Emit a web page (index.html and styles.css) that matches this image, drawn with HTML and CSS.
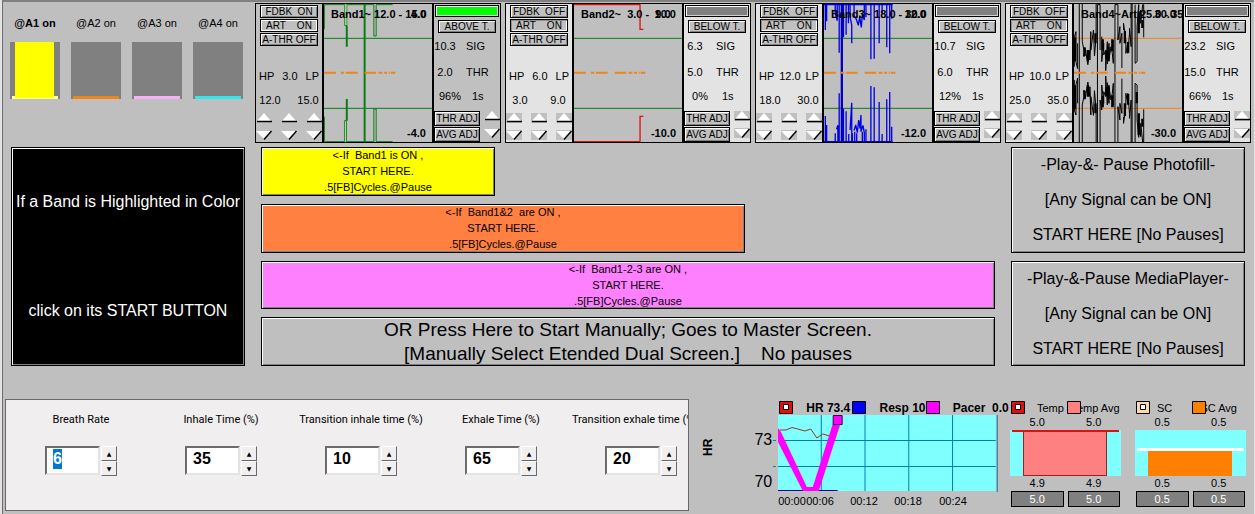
FILE: index.html
```html
<!DOCTYPE html>
<html lang="en">
<head>
<meta charset="utf-8">
<title>Band Training</title>
<link rel="stylesheet" href="styles.css">
</head>
<body>
<svg class="defs" aria-hidden="true">
  <symbol id="up" viewBox="0 0 16 10"><path d="M8 0L15 8H1z" fill="#fff"/><path d="M1 8.500H16" stroke="#000" stroke-width="1.500"/></symbol>
  <symbol id="down" viewBox="0 0 16 10"><path d="M0 1H15L8 9z" fill="#fff"/><path d="M8 9.500L15.500 1" stroke="#000" stroke-width="1.500"/></symbol>
  <symbol id="dashes" viewBox="222 12 327 414" preserveAspectRatio="none"><path d="M222 218H258M273 218H283M288 218H324M345 218H380M387 218H399M404 218H413M418 218H421M424 218H438" stroke="#f08418" stroke-width="6"/></symbol>
  <symbol id="marker" viewBox="0 0 14 13"><path d="M.5.5h13v12H.5z" stroke="#000"/></symbol>
  <symbol id="target" viewBox="0 0 14 13"><path d="M.5.5h13v12H.5z" stroke="#000"/><path d="M4.500 3.500h5v5h-5z" fill="#fff" stroke="#000"/></symbol>
</svg>
<main class="screen">
  <header class="top">
    <section class="signals">
      <div class="signal on"><span>@A1 on</span><div class="well yellow"><i></i></div></div>
      <div class="signal"><span>@A2 on</span><div class="well orange"></div></div>
      <div class="signal"><span>@A3 on</span><div class="well pink"></div></div>
      <div class="signal"><span>@A4 on</span><div class="well cyan"></div></div>
    </section>
    <section class="bands">
      <article class="band active">
        <div class="filters">
          <button>FDBK&nbsp; ON</button><button class="art">ART &nbsp; &nbsp;ON</button><button>A-THR OFF</button>
          <div class="row first"><span>HP</span><span>3.0</span><span>LP</span></div>
          <div class="row"><span>12.0</span><span>15.0</span></div>
          <div class="spins">
            <div class="spin"><button aria-label="High pass up"><svg><use href="#up"/></svg></button><button aria-label="High pass down"><svg><use href="#down"/></svg></button></div>
            <div class="spin"><button aria-label="Width up"><svg><use href="#up"/></svg></button><button aria-label="Width down"><svg><use href="#down"/></svg></button></div>
            <div class="spin"><button aria-label="Low pass up"><svg><use href="#up"/></svg></button><button aria-label="Low pass down"><svg><use href="#down"/></svg></button></div>
          </div>
        </div>
        <div class="scope">
          <svg viewBox="222 12 327 414" preserveAspectRatio="none" fill="none" stroke="#0c7c14" stroke-width="3">
            <path d="M222 115H549M222 325H549"/>
            <path d="M223 87V14H285V77H291V14H373V108H380V14H430M223 350V425H284V362H290V425H373V327H380V425H430" />
            <path d="M286 15h4v60h-4zM285 364h4v60h-4z" fill="#a0dca0" stroke="none"/>
            <path d="M345 12V426M291 77V140M291 297V362" stroke-width="6"/>
            <use href="#dashes" x="222" y="12" width="327" height="414"/>
          </svg>
          <b class="title">Band1~ 12.0 - 15.0</b><b class="max">4.0</b><b class="min">-4.0</b>
        </div>
        <div class="levels">
          <div class="lamp"></div><button class="state">ABOVE T.</button>
          <div class="level"><span>10.3</span><span>SIG</span></div>
          <div class="level"><span>2.0</span><span>THR</span></div>
          <div class="level time"><span>96%</span><span>1s</span></div>
          <div class="adjust"><div class="adj"><button>THR ADJ</button><button>AVG ADJ</button></div>
            <div class="spin"><button aria-label="Adjust up"><svg><use href="#up"/></svg></button><button aria-label="Adjust down"><svg><use href="#down"/></svg></button></div></div>
        </div>
      </article>

      <article class="band">
        <div class="filters">
          <button>FDBK&nbsp; OFF</button><button class="art">ART &nbsp; &nbsp;ON</button><button>A-THR OFF</button>
          <div class="row first"><span>HP</span><span>6.0</span><span>LP</span></div>
          <div class="row"><span>3.0</span><span>9.0</span></div>
          <div class="spins">
            <div class="spin"><button aria-label="High pass up"><svg><use href="#up"/></svg></button><button aria-label="High pass down"><svg><use href="#down"/></svg></button></div>
            <div class="spin"><button aria-label="Width up"><svg><use href="#up"/></svg></button><button aria-label="Width down"><svg><use href="#down"/></svg></button></div>
            <div class="spin"><button aria-label="Low pass up"><svg><use href="#up"/></svg></button><button aria-label="Low pass down"><svg><use href="#down"/></svg></button></div>
          </div>
        </div>
        <div class="scope">
          <svg viewBox="222 12 327 414" preserveAspectRatio="none" fill="none" stroke="#0c7c14" stroke-width="3">
            <path d="M222 115H549M222 325H549"/>
            <path d="M222 14H422V88H432M222 425H422V349H432" stroke="#e01010" stroke-width="4"/>
            <use href="#dashes" x="222" y="12" width="327" height="414"/>
          </svg>
          <b class="title">Band2~  3.0 -  9.0</b><b class="max">10.0</b><b class="min">-10.0</b>
        </div>
        <div class="levels">
          <div class="lamp"></div><button class="state">BELOW T.</button>
          <div class="level"><span>6.3</span><span>SIG</span></div>
          <div class="level"><span>5.0</span><span>THR</span></div>
          <div class="level time"><span>0%</span><span>1s</span></div>
          <div class="adjust"><div class="adj"><button>THR ADJ</button><button>AVG ADJ</button></div>
            <div class="spin"><button aria-label="Adjust up"><svg><use href="#up"/></svg></button><button aria-label="Adjust down"><svg><use href="#down"/></svg></button></div></div>
        </div>
      </article>

      <article class="band">
        <div class="filters">
          <button>FDBK&nbsp; OFF</button><button class="art">ART &nbsp; &nbsp;ON</button><button>A-THR OFF</button>
          <div class="row first"><span>HP</span><span>12.0</span><span>LP</span></div>
          <div class="row"><span>18.0</span><span>30.0</span></div>
          <div class="spins">
            <div class="spin"><button aria-label="High pass up"><svg><use href="#up"/></svg></button><button aria-label="High pass down"><svg><use href="#down"/></svg></button></div>
            <div class="spin"><button aria-label="Width up"><svg><use href="#up"/></svg></button><button aria-label="Width down"><svg><use href="#down"/></svg></button></div>
            <div class="spin"><button aria-label="Low pass up"><svg><use href="#up"/></svg></button><button aria-label="Low pass down"><svg><use href="#down"/></svg></button></div>
          </div>
        </div>
        <div class="scope">
          <svg viewBox="222 12 327 414" preserveAspectRatio="none" fill="none" stroke="#0c7c14" stroke-width="3">
            <path d="M222 115H549M222 325H549"/>
            <path stroke="#0000e8" stroke-width="4" d="M222 14H430M226 14V90M230 14V64M256 14V40L262 62V14M268 14V158M276 12V426M281 14V112M289 14V104M296 14V70M301 14V50L306 76V130M313 14V46L320 58L326 76L330 50L335 82L338 44L344 60V14M349 14V52M364 14V178M374 14V176M389 14V130M398 14V40M412 14V142M421 14V160M427 14V56M222 425H430M226 348V425M230 375V425M256 400V425M260 388L264 376V425M268 280V425M281 326V425M289 334V425M297 402V425M301 390L306 308V425M313 392L318 375L323 398L327 360L331 385L334 345V395L340 376L344 398V425M349 388V425M364 258V425M374 262V425M389 306V425M398 402V425M412 298V425M421 276V425M427 380V425M308 400V425M315 395V425M321 400V425M338 395V425"/>
            <path stroke="#0000c0" stroke-width="7" d="M276 12V426"/>
            <use href="#dashes" x="222" y="12" width="327" height="414"/>
          </svg>
          <b class="title">Band3~ 18.0 - 30.0</b><b class="max">12.0</b><b class="min">-12.0</b>
        </div>
        <div class="levels">
          <div class="lamp"></div><button class="state">BELOW T.</button>
          <div class="level"><span>10.7</span><span>SIG</span></div>
          <div class="level"><span>6.0</span><span>THR</span></div>
          <div class="level time"><span>12%</span><span>1s</span></div>
          <div class="adjust"><div class="adj"><button>THR ADJ</button><button>AVG ADJ</button></div>
            <div class="spin"><button aria-label="Adjust up"><svg><use href="#up"/></svg></button><button aria-label="Adjust down"><svg><use href="#down"/></svg></button></div></div>
        </div>
      </article>

      <article class="band">
        <div class="filters">
          <button>FDBK&nbsp; OFF</button><button class="art">ART &nbsp; &nbsp;ON</button><button>A-THR OFF</button>
          <div class="row first"><span>HP</span><span>10.0</span><span>LP</span></div>
          <div class="row"><span>25.0</span><span>35.0</span></div>
          <div class="spins">
            <div class="spin"><button aria-label="High pass up"><svg><use href="#up"/></svg></button><button aria-label="High pass down"><svg><use href="#down"/></svg></button></div>
            <div class="spin"><button aria-label="Width up"><svg><use href="#up"/></svg></button><button aria-label="Width down"><svg><use href="#down"/></svg></button></div>
            <div class="spin"><button aria-label="Low pass up"><svg><use href="#up"/></svg></button><button aria-label="Low pass down"><svg><use href="#down"/></svg></button></div>
          </div>
        </div>
        <div class="scope">
          <svg viewBox="222 12 327 414" preserveAspectRatio="none" fill="none" stroke="#f08418" stroke-width="3">
            <path d="M222 115H549M222 325H549"/>
            <path stroke="#000" d="M223 200V110L228 95V186L233 206V130M238 426V12M247 12V125L252 150V170L256 145L264 194L270 150V180L273 95V150L281 90L284 168L289 110V12M293 426V14H301V150M306 110V185L312 130V165L318 150V212L323 125V192L328 130V178L334 140L338 160L341 190V120M346 426V14H355V120L361 80V130L367 100V204M372 90V70L379 120V160L385 128V160L390 100V85L395 140V12M398 426V12M407 14V190L413 185V80L418 14V72L424 30V70L430 14H433V112M223 240V330L228 345V254L233 234V310M247 426V315L252 290V270L256 295L264 246L270 290V260L273 345V290L281 346L284 272L289 330V426M301 426V300L306 330V255L312 310V275L318 290V228L323 315V248L328 310V262L334 300L338 280L341 250V320M355 426V320L361 360V310L367 340V236M372 350V370L379 320V280L385 312V280L390 340V355L395 300V426M407 426V250L413 255V360L418 412V368L424 410V370L430 426H433V328"/>
            <path stroke="#000" stroke-width="7" d="M225 112V184M254 142V168M264 150V184M287 100V130M309 118V152M320 152V178M327 142V184M338 118V154M376 92V130M386 126V158M418 34V100M429 60V84M225 256V328M254 272V298M264 256V290M287 310V340M309 288V322M320 262V288M327 256V298M338 286V322M376 310V348M386 282V314M418 340V406M429 356V380M412 276V310"/>
            <use href="#dashes" x="222" y="12" width="327" height="414"/>
          </svg>
          <b class="title">Band4~Art 25.0 - 35.0</b><b class="max">30.0</b><b class="min">-30.0</b>
        </div>
        <div class="levels">
          <div class="lamp"></div><button class="state">BELOW T.</button>
          <div class="level"><span>23.2</span><span>SIG</span></div>
          <div class="level"><span>15.0</span><span>THR</span></div>
          <div class="level time"><span>66%</span><span>1s</span></div>
          <div class="adjust"><div class="adj"><button>THR ADJ</button><button>AVG ADJ</button></div>
            <div class="spin"><button aria-label="Adjust up"><svg><use href="#up"/></svg></button><button aria-label="Adjust down"><svg><use href="#down"/></svg></button></div></div>
        </div>
      </article>
    </section>
  </header>

  <section class="starts">
    <div class="raised notice"><p>If a Band is Highlighted in Color</p><p>click on its START BUTTON</p></div>
    <button class="raised small span1">&lt;-If  Band1 is ON ,
START HERE.
.5[FB]Cycles.@Pause</button>
    <button class="raised small span2">&lt;-If  Band1&amp;2  are ON ,
START HERE.
.5[FB]Cycles.@Pause</button>
    <button class="raised small span3">&lt;-If  Band1-2-3 are ON ,
START HERE.
.5[FB]Cycles.@Pause</button>
    <button class="raised manual">OR Press Here to Start Manually; Goes to Master Screen.
[Manually Select Etended Dual Screen.]    No pauses</button>
    <button class="raised play photo">-Play-&amp;- Pause Photofill-
[Any Signal can be ON]
START HERE [No Pauses]</button>
    <button class="raised play media">-Play-&amp;-Pause MediaPlayer-
[Any Signal can be ON]
START HERE [No Pauses]</button>
  </section>

  <section class="bottom">
    <form class="pacer">
      <div class="field"><label for="rate">Breath Rate</label><div class="stepper"><div class="box"><input id="rate" class="selected" value="6"></div><div class="steps"><button type="button" aria-label="Increase">▲</button><button type="button" aria-label="Decrease">▼</button></div></div></div>
      <div class="field"><label for="inhale">Inhale Time (%)</label><div class="stepper"><div class="box"><input id="inhale" value="35"></div><div class="steps"><button type="button" aria-label="Increase">▲</button><button type="button" aria-label="Decrease">▼</button></div></div></div>
      <div class="field"><label for="tin">Transition inhale time (%)</label><div class="stepper"><div class="box"><input id="tin" value="10"></div><div class="steps"><button type="button" aria-label="Increase">▲</button><button type="button" aria-label="Decrease">▼</button></div></div></div>
      <div class="field"><label for="exhale">Exhale Time (%)</label><div class="stepper"><div class="box"><input id="exhale" value="65"></div><div class="steps"><button type="button" aria-label="Increase">▲</button><button type="button" aria-label="Decrease">▼</button></div></div></div>
      <div class="field last"><label for="tex">Transition exhale time (%)</label><div class="stepper"><div class="box"><input id="tex" value="20"></div><div class="steps"><button type="button" aria-label="Increase">▲</button><button type="button" aria-label="Decrease">▼</button></div></div></div>
    </form>
    <div class="axis-name">HR</div>
    <div class="yaxis"><span>73</span><span>70</span></div>
    <div class="trend">
      <div class="legend">
        <div><svg class="mark" fill="#e01010"><use href="#target"/></svg><b>HR 73.4</b></div>
        <div><svg class="mark" fill="#0000ff"><use href="#marker"/></svg><b>Resp 10.0</b></div>
        <div><svg class="mark" fill="#ff00ff"><use href="#marker"/></svg><b>Pacer  0.0</b></div>
      </div>
      <svg class="plot" viewBox="0 0 221 77" preserveAspectRatio="none" fill="none" stroke="#0080b0">
        <path d="M0 0h219v76H0z" fill="#80ffff" stroke="none"/>
        <path d="M43.500 0V76M87.500 0V76M131.500 0V76M175.500 0V76M220.500 0V77M0 25.500H219M0 51.500H219M-5 25.500h3M-5 51.500h3"/>
        <path d="M0 75.500H60" stroke="#0000b0"/>
        <path d="M2 15L8 15L14 12.500L20 14L27 16L33 14L39 23L45 19L52 21" stroke="#a03020"/>
        <path d="M0 13V27L25 76H41L63 8L56 6L35 72H29L3 17z" fill="#ff00ff" stroke="none"/>
        <path d="M55.500.5h9v9h-9z" fill="#ff00ff" stroke="#400040"/>
      </svg>
      <div class="times"><span>00:00</span><span>00:06</span><span>00:12</span><span>00:18</span><span>00:24</span></div>
    </div>
    <div class="gauge temp">
      <div class="g-legend"><div><svg class="mark" fill="#e01010"><use href="#target"/></svg><span>Temp</span></div><div><span>Temp Avg</span><svg class="mark" fill="#ff8080"><use href="#marker"/></svg></div></div>
      <div class="pair"><span>5.0</span><span>5.0</span></div>
      <div class="tank"><i></i></div>
      <div class="pair"><span>4.9</span><span>4.9</span></div>
      <div class="pair boxes"><span>5.0</span><span>5.0</span></div>
    </div>
    <div class="gauge sc">
      <div class="g-legend"><div><svg class="mark" fill="#ffd8b0"><use href="#target"/></svg><span>SC</span></div><div><span>SC Avg</span><svg class="mark" fill="#ff8000"><use href="#marker"/></svg></div></div>
      <div class="pair"><span>0.5</span><span>0.5</span></div>
      <div class="tank"><i></i></div>
      <div class="pair"><span>0.5</span><span>0.5</span></div>
      <div class="pair boxes"><span>0.5</span><span>0.5</span></div>
    </div>
  </section>
</main>
</body>
</html>
```

FILE: styles.css
```css
* { box-sizing: border-box; }
body {
  margin: 0;
  padding: 0 1px 0 2px;
  background: #e4e4e4;
  color: #000;
  font: 11px/16px "Liberation Sans", Arial, sans-serif;
  overflow: hidden;
}
button { font: inherit; color: inherit; margin: 0; padding: 0; border: 0; border-radius: 0; }
p { margin: 0; }
svg { display: block; }
.defs { display: none; }

.screen {
  min-height: 100vh;
  background: #bfbfc0;
  border-top: 2px solid #808080;
  border-left: 1px solid #6c6c6c;
}

/* Top strip */
.top { display: flex; padding: 1px 3px 0 7px; }
.signals { flex: none; width: 245px; display: flex; gap: 11px; padding-top: 12px; }
.signal { width: 50px; text-align: center; }
.signal span { display: block; white-space: nowrap; margin-bottom: 11px; }
.signal.on span { font-weight: bold; }
.well { height: 57px; background: #808080; padding: 0 5px; position: relative; }
.well i { display: block; height: 56px; width: 39px; background: #ffff00; position: relative; z-index: 1; }
.well::after { content: ""; position: absolute; left: 2px; right: 2px; bottom: 0; height: 3px; background: var(--base); }
.yellow { --base: #ffffa0; }
.orange { --base: #f08418; }
.pink { --base: #f8b0f8; }
.cyan { --base: #30e8f0; }

.bands { flex: 1; display: grid; grid-template-columns: repeat(4, 1fr); gap: 4px; }
.band {
  display: grid;
  grid-template-columns: 66px minmax(0, 1fr) 66px;
  height: 140px;
  border: 1px solid #000;
  background: #e3e3e3;
}
.band.active { background: #c0c0c0; }
.filters { display: flex; flex-direction: column; gap: 1px; padding-top: 1px; }
.filters > button, .state, .adj button {
  height: 13px;
  background: #c0c0c0;
  border: 1px solid #000;
  box-shadow: inset 1px 1px #fff, inset -1px -1px #808080;
  font-size: 10px;
  line-height: 11px;
  white-space: nowrap;
}
.filters > button { margin: 0 4px; }
.filters > .art { box-shadow: inset 1px 1px #909090, inset -1px -1px #fff; }
.active .art { box-shadow: inset 1px 1px #fff, inset -1px -1px #fff; }
.row { display: flex; justify-content: space-between; padding: 0 3px; line-height: 23px; }
.row.first { margin-top: 18px; }
.row:not(.first) span { width: 22px; text-align: center; }
.spins { display: flex; justify-content: space-between; }
.spin { width: 16px; display: flex; flex-direction: column; gap: 7px; }
.spin button { height: 10px; background: #c0c0c0; }
.spin svg { width: 16px; height: 10px; }

.scope {
  position: relative;
  background: #bfbfc0;
  border: solid #000;
  border-width: 0 2px;
  overflow: hidden;
}
.scope > svg { width: 100%; height: 100%; }
.scope b { position: absolute; line-height: 12px; white-space: pre; }
.title { left: 7px; top: 4px; }
.max { right: 6px; top: 4px; }
.min { right: 6px; bottom: 3px; }

.levels { padding-top: 1px; }
.lamp { height: 12px; margin: 0 1px; background: #808080; border: 1px solid #000; box-shadow: inset 1px 1px #fff, inset -1px -1px #d0d0d0; }
.active .lamp { background: #00ff00; }
.state { display: block; width: 58px; margin: 3px 4px 0; }
.level { display: grid; grid-template-columns: 22px 1fr; column-gap: 10px; line-height: 26px; }
.level span:first-child { text-align: center; }
.level.time { line-height: 23px; grid-template-columns: 32px 1fr; column-gap: 6px; }
.adjust { display: flex; justify-content: space-between; padding-top: 3px; }
.adj { width: 46px; display: grid; gap: 1px; }
.adj button { height: 15px; line-height: 13px; }

/* Start buttons */
.starts {
  display: grid;
  grid-template-columns: repeat(5, 1fr);
  grid-template-rows: repeat(4, 1fr);
  gap: 8px 16px;
  min-height: 219px;
  margin: 4px 9px 0 8px;
}
.raised {
  background: #bfbfc0;
  box-shadow: inset 0 0 0 1px #000, inset 2px 2px #fff, inset -2px -2px #808080;
  white-space: pre;
  text-align: center;
}
.notice { grid-row: 1 / 5; background: #000; color: #fff; font-size: 16px; line-height: 109px; }
.span1 { grid-area: 1 / 2 / 2 / 3; background: #ffff00; }
.span2 { grid-area: 2 / 2 / 3 / 4; background: #ff8040; }
.span3 { grid-area: 3 / 2 / 4 / 5; background: #ff80ff; }
.manual { grid-area: 4 / 2 / 5 / 5; font-size: 19px; line-height: 24px; }
.play { font-size: 16px; line-height: 35px; }
.photo { grid-area: 1 / 5 / 3 / 6; }
.media { grid-area: 3 / 5 / 5 / 6; }

/* Bottom strip */
.bottom { display: flex; margin: 33px 8px 0 2px; }
.pacer {
  flex: 681 1 0;
  min-width: 0;
  height: 112px;
  display: flex;
  padding-left: 5px;
  background: #f0eeef;
  border: 1px solid #68686c;
  overflow: hidden;
}
.field { flex: none; width: 140px; padding-top: 12px; }
.field.last { width: 128px; }
.field label { display: block; text-align: center; white-space: nowrap; font-family: Roboto, "Liberation Sans", sans-serif; }
.stepper { display: flex; gap: 1px; padding: 18px 0 0 34px; }
.box { width: 55px; height: 29px; background: #fff; border: 2px solid; border-color: #6c6c6c #e4e4e4 #e4e4e4 #6c6c6c; padding: 1px 0 0 6px; }
.box input { display: block; width: 40px; height: 20px; padding: 0; border: 0; outline: 0; background: none; font: bold 16px/20px "Liberation Sans", Arial, sans-serif; }
.box .selected { width: 9px; background: #0078d7; color: #fff; }
.steps { width: 16px; display: grid; }
.steps button { height: 15px; background: #f0eeef; border: 1px solid; border-color: #fff #68686c #68686c #fff; font: 6px/12px "DejaVu Sans", sans-serif; }

.axis-name { writing-mode: vertical-rl; transform: rotate(180deg); width: 16px; margin: 37px 0 0 11px; height: 20px; font-weight: bold; font-size: 12px; line-height: 16px; }
.yaxis { width: 56px; padding-top: 31px; display: grid; align-content: start; gap: 22px; text-align: right; font-size: 16px; line-height: 20px; }
.trend { flex: 221 1 0; min-width: 0; margin-left: 6px; }
.legend { display: grid; grid-template-columns: repeat(3, 1fr); height: 14px; margin-top: 2px; font-size: 12px; line-height: 14px; }
.legend div { display: flex; gap: 13px; padding-left: 1px; white-space: pre; min-width: 0; }
.mark { flex: none; width: 14px; height: 13px; }
.plot { width: 100%; height: 77px; overflow: visible; }
.times { display: grid; grid-template-columns: 28px 44px 44px 45px 45px; line-height: 18px; }
.gauge { flex: 0 0 111px; margin-left: 12px; }
.gauge + .gauge { margin-left: 14px; }
.g-legend { display: grid; grid-template-columns: 1fr 1fr; margin-top: 2px; height: 14px; line-height: 14px; white-space: nowrap; }
.g-legend div { position: relative; padding-left: 1px; display: flex; gap: 12px; }
.g-legend div + div { padding-left: 6px; }
.g-legend div + div .mark { position: absolute; left: 1px; top: 0; }
.sc .g-legend div { gap: 7px; }
.sc .g-legend div + div { padding-left: 10px; }
.pair { display: grid; grid-template-columns: 1fr 1fr; gap: 4px; padding: 0 1px; text-align: center; line-height: 15px; }
.tank { position: relative; height: 46px; background: #80ffff; padding: 0 14px 0 13px; display: flex; align-items: end; }
.tank i { flex: 1; height: 46px; background: #ff8080; border: 1px solid #a02020; }
.tank::after { content: ""; position: absolute; left: 2px; right: 2px; top: 0; height: 2px; background: #e01010; }
.sc .tank i { height: 25px; background: #ff8000; border: 0; }
.sc .tank::after { top: 18px; height: 3px; background: #fff; }
.boxes span { background: #808080; border: 1px solid #000; color: #fff; height: 16px; line-height: 14px; }
```
